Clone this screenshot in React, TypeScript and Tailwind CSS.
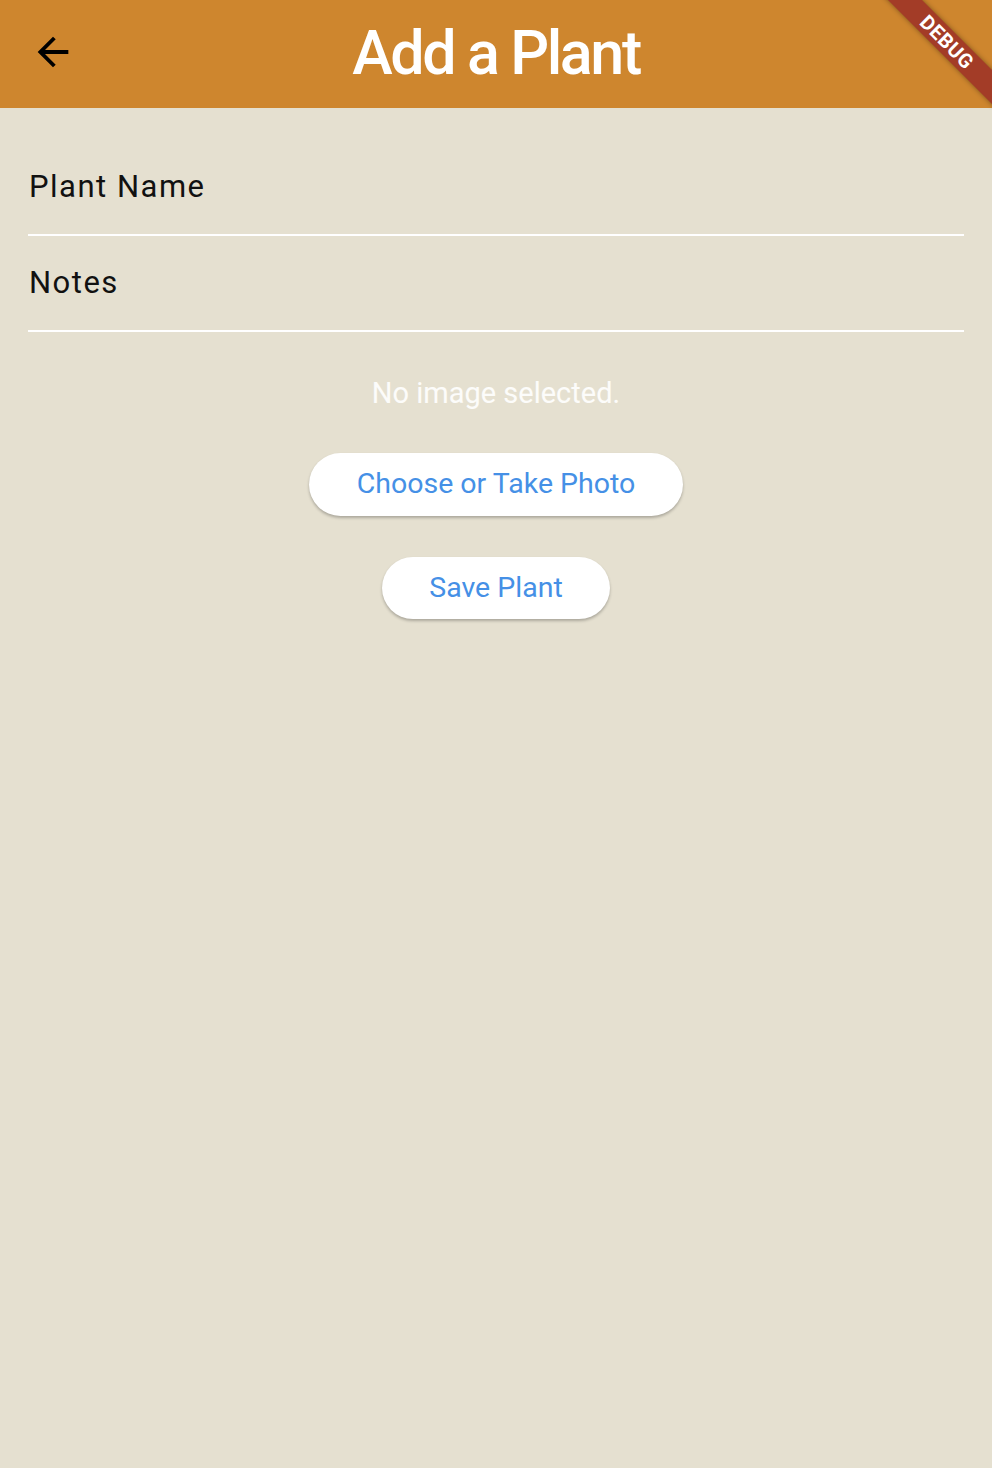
function DebugBanner() {
    return (
        <div className="pointer-events-none absolute top-0 right-0 w-[140px] h-[110px] overflow-hidden">
            <div className="absolute left-[-5px] top-[30px] w-[200px] h-[24px] rotate-45 bg-[#a33c27] shadow-[0_0_5px_rgba(0,0,0,0.4)] flex items-center justify-center">
                <span className="text-white text-[20px] font-bold tracking-[0.5px] leading-none">DEBUG</span>
            </div>
        </div>
    );
}

function BackArrow() {
    return (
        <svg width="46" height="46" viewBox="0 0 24 24" fill="black">
            <path d="M20 11H7.83l5.59-5.59L12 4l-8 8 8 8 1.41-1.41L7.83 13H20v-2z" />
        </svg>
    );
}

function Field({ label, first }: { label: string; first?: boolean }) {
    return (
        <div className={first ? "pt-[32px]" : ""}>
            <div className="h-[96px] flex items-center border-b-[2px] border-white">
                <span className="pl-[1px] text-[31px] tracking-[1.5px] text-[#111]">{label}</span>
            </div>
        </div>
    );
}

export default function App() {
    return (
        <div className="min-h-[1468px] bg-[#e5e0d0] font-['Roboto',sans-serif]">
            <header className="relative h-[108px] bg-[#ce862e] flex items-center justify-center">
                <button className="absolute left-[30px] top-[29px] flex items-center justify-center">
                    <BackArrow />
                </button>
                <h1 className="text-white text-[61px] font-medium tracking-[-2.4px] leading-none pb-[2px]">Add a Plant</h1>
                <DebugBanner />
            </header>

            <main className="px-[28px]">
                <Field label="Plant Name" first />
                <Field label="Notes" />

                <p className="mt-[47px] text-center text-[29px] text-white/90 leading-none">No image selected.</p>

                <div className="mt-[45px] flex flex-col items-center gap-[41px]">
                    <button className="w-[374px] h-[63px] rounded-full bg-white text-[#4590e6] text-[28.5px] shadow-[0_2px_3px_rgba(0,0,0,0.25)]">
                        Choose or Take Photo
                    </button>
                    <button className="w-[228px] h-[62px] rounded-full bg-white text-[#4590e6] text-[28.5px] shadow-[0_2px_3px_rgba(0,0,0,0.25)]">
                        Save Plant
                    </button>
                </div>
            </main>
        </div>
    );
}
